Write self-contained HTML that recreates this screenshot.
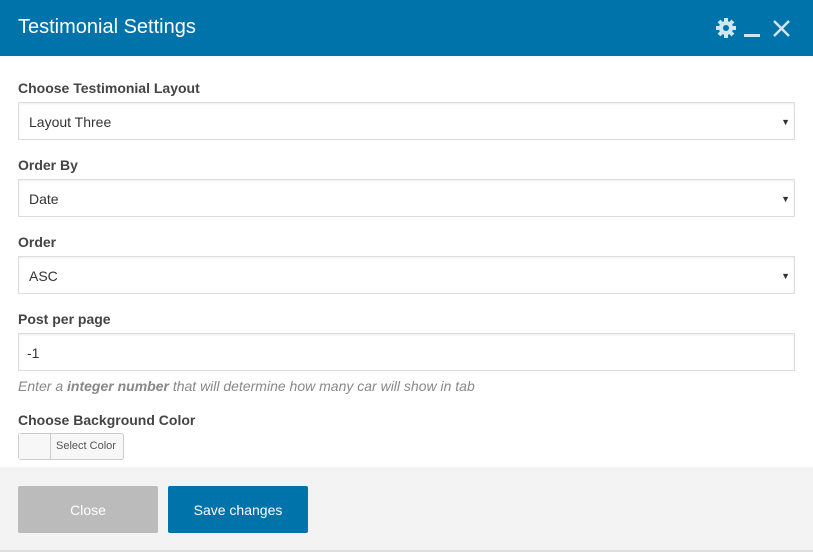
<!DOCTYPE html>
<html><head><style>
body{margin:0;width:813px;height:553px;overflow:hidden;background:#fff;font-family:"Liberation Sans",sans-serif;position:relative}
.hd{position:absolute;left:0;top:0;width:813px;height:56px;background:#0073aa;color:#fff}
.hd .t{position:absolute;left:18px;top:16px;font-size:20px}
.lb{position:absolute;left:18px;font-size:14px;font-weight:bold;color:#444}
.box{position:absolute;left:18px;width:775px;height:36px;border:1px solid #ddd;font-size:14px;color:#333;line-height:38px;text-indent:10px;box-shadow:inset 0 1px 2px rgba(0,0,0,.07)}
.box .a{position:absolute;right:4px;top:0;font-size:9px;color:#333}
.help{position:absolute;left:18px;top:378px;font-size:14px;color:#888;font-style:italic}
.cb{position:absolute;left:18px;top:433px;width:104px;height:25px;border:1px solid #ccc;border-radius:3px;background:#f7f7f7}
.cb .s{position:absolute;left:0;top:0;width:31px;height:25px;border-right:1px solid #ccc;background:#f7f7f7}
.cb .x{position:absolute;left:37px;top:6px;font-size:11px;color:#555}
.ft{position:absolute;left:0;top:467px;width:813px;height:83px;background:#f3f3f3;border-bottom:2px solid #ddd}
.btn{position:absolute;top:19px;width:140px;height:47px;border-radius:2px;color:#fff;font-size:14px;text-align:center;line-height:48px}
</style></head><body>
<div class="hd"><div class="t">Testimonial Settings</div>
<svg style="position:absolute;left:712px;top:14px" width="80" height="30" viewBox="0 0 80 30">
<g fill="#cfe6f3"><circle cx="14" cy="14" r="7"/>
<g stroke="#cfe6f3" stroke-width="4"><line x1="14" y1="4" x2="14" y2="24"/><line x1="4" y1="14" x2="24" y2="14"/><line x1="7" y1="7" x2="21" y2="21"/><line x1="21" y1="7" x2="7" y2="21"/></g>
<circle cx="14" cy="14" r="3" fill="#0073aa"/>
<rect x="32" y="20" width="16" height="3"/></g>
<g stroke="#cfe6f3" stroke-width="2.5"><line x1="62" y1="7" x2="77" y2="22"/><line x1="77" y1="7" x2="62" y2="22"/></g>
</svg></div>
<div class="lb" style="top:80px">Choose Testimonial Layout</div>
<div class="box" style="top:102px">Layout Three<span class="a">▼</span></div>
<div class="lb" style="top:157px">Order By</div>
<div class="box" style="top:179px">Date<span class="a">▼</span></div>
<div class="lb" style="top:234px">Order</div>
<div class="box" style="top:256px">ASC<span class="a">▼</span></div>
<div class="lb" style="top:311px">Post per page</div>
<div class="box" style="top:333px;text-indent:8px">-1</div>
<div class="help">Enter a <b>integer number</b> that will determine how many car will show in tab</div>
<div class="lb" style="top:412px">Choose Background Color</div>
<div class="cb"><div class="s"></div><div class="x">Select Color</div></div>
<div class="ft">
<div class="btn" style="left:18px;background:#bbb">Close</div>
<div class="btn" style="left:168px;background:#0073aa">Save changes</div>
</div>
</body></html>
